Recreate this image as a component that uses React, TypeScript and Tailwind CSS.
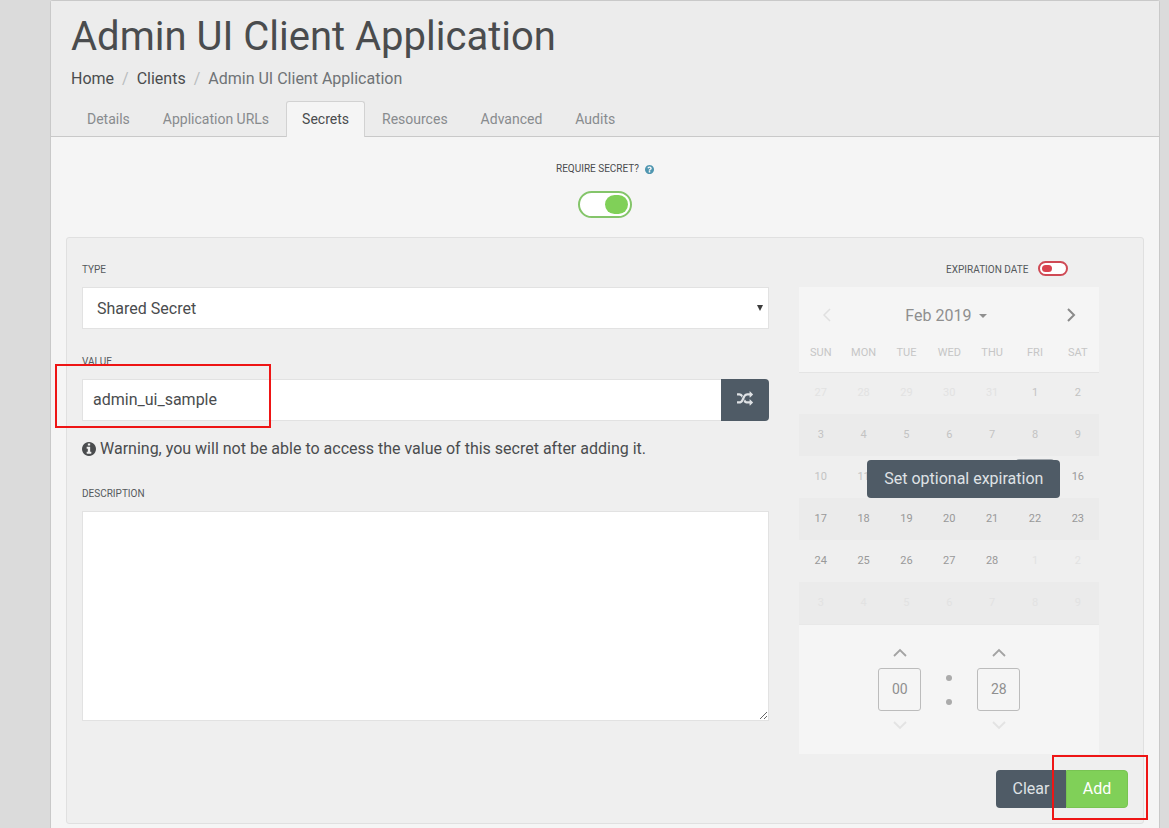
import React from "react";

const TABS = ["Details", "Application URLs", "Secrets", "Resources", "Advanced", "Audits"];
const WEEKDAYS = ["SUN", "MON", "TUE", "WED", "THU", "FRI", "SAT"];

type Tone = "outside" | "past" | "open" | "selected";
type Day = { n: number; tone: Tone };

const TONES: Record<Tone, string> = {
  outside: "text-[#e2e2e2]",
  past: "text-[#c3c3c3]",
  open: "text-[#999999]",
  selected: "bg-[#9fa5ab] text-white",
};

function range(from: number, to: number, tone: Tone): Day[] {
  return Array.from({ length: to - from + 1 }, (_, i) => ({ n: from + i, tone }));
}

const WEEKS: Day[][] = [
  [...range(27, 31, "outside"), ...range(1, 2, "past")],
  range(3, 9, "past"),
  [...range(10, 14, "past"), { n: 15, tone: "selected" }, { n: 16, tone: "open" }],
  range(17, 23, "open"),
  [...range(24, 28, "open"), ...range(1, 2, "outside")],
  range(3, 9, "outside"),
];

function ShuffleIcon() {
  return (
    <svg viewBox="0 0 1792 1792" className="h-4 w-4" fill="currentColor" aria-hidden="true">
      <path d="M666 481q-60 92-137 273-22-45-37-72.5t-40.5-63.5-51-56.5-63-35-81.5-14.5h-224q-14 0-23-9t-9-23v-192q0-14 9-23t23-9h224q250 0 410 225zm1126 799q0 14-9 23l-320 320q-9 9-23 9-13 0-22.5-9.5t-9.5-22.5v-192q-32 0-85 .5t-81 1-73-1-71-5-64-10.5-63-18.5-58-28.5-59-40-55-53.5-56-69.5q59-93 136-273 22 45 37 72.5t40.5 63.5 51 56.5 63 35 81.5 14.5h256v-192q0-14 9-23t23-9q12 0 24 10l319 319q9 9 9 23zm0-896q0 14-9 23l-320 320q-9 9-23 9-13 0-22.5-9.5t-9.5-22.5v-192h-256q-48 0-87 15t-69 45-51 61.5-45 77.5q-32 62-78 171-29 66-49.5 111t-54 105-64 100-74 83-90 68.5-106.5 42-128 16.5h-224q-14 0-23-9t-9-23v-192q0-14 9-23t23-9h224q48 0 87-15t69-45 51-61.5 45-77.5q32-62 78-171 29-66 49.5-111t54-105 64-100 74-83 90-68.5 106.5-42 128-16.5h256v-192q0-14 9-23t23-9q12 0 24 10l319 319q9 9 9 23z" />
    </svg>
  );
}

function InfoIcon() {
  return (
    <svg viewBox="128 128 1536 1536" className="h-3.5 w-3.5" fill="currentColor" aria-hidden="true">
      <path d="M1152 1376v-160q0-14-9-23t-23-9h-96v-512q0-14-9-23t-23-9h-320q-14 0-23 9t-9 23v160q0 14 9 23t23 9h96v320h-96q-14 0-23 9t-9 23v160q0 14 9 23t23 9h448q14 0 23-9t9-23zm-128-896v-160q0-14-9-23t-23-9h-192q-14 0-23 9t-9 23v160q0 14 9 23t23 9h192q14 0 23-9t9-23zm640 416q0 209-103 385.5t-279.5 279.5-385.5 103-385.5-103-279.5-279.5-103-385.5 103-385.5 279.5-279.5 385.5-103 385.5 103 279.5 279.5 103 385.5z" />
    </svg>
  );
}

function QuestionIcon() {
  return (
    <svg viewBox="128 128 1536 1536" className="h-[9px] w-[9px] text-[#4f96b0]" fill="currentColor" aria-hidden="true">
      <path d="M1024 1376v-192q0-14-9-23t-23-9h-192q-14 0-23 9t-9 23v192q0 14 9 23t23 9h192q14 0 23-9t9-23zm256-672q0-88-55.5-163t-138.5-116-170-41q-243 0-371 213-15 24 8 42l132 100q7 6 19 6 16 0 25-12 53-68 86-92 34-24 86-24 48 0 85.5 26t37.5 59q0 38-20 61t-68 45q-63 28-115.5 86.5t-52.5 125.5v36q0 14 9 23t23 9h192q14 0 23-9t9-23q0-19 21.5-49.5t54.5-49.5q32-18 49-28.5t46-35 44.5-48 28-60.5 12.5-81zm384 192q0 209-103 385.5t-279.5 279.5-385.5 103-385.5-103-279.5-279.5-103-385.5 103-385.5 279.5-279.5 385.5-103 385.5 103 279.5 279.5 103 385.5z" />
    </svg>
  );
}

function Chevron({ points, className }: { points: string; className: string }) {
  return (
    <svg viewBox="0 0 14 14" className={`h-3.5 w-3.5 ${className}`} fill="none" stroke="currentColor" aria-hidden="true">
      <polyline points={points} />
    </svg>
  );
}

function TimeField({ label, value }: { label: string; value: string }) {
  return (
    <div className="flex flex-col items-center gap-2">
      <button type="button" aria-label={`Increase ${label}`} className="text-[#a3a3a3]">
        <Chevron points="1,10 7,4 13,10" className="stroke-[1.8]" />
      </button>
      <input
        aria-label={label}
        defaultValue={value}
        className="h-[43px] w-[43px] rounded-[3px] border border-[#bcbcbc] bg-transparent pb-0.5 text-center text-sm text-[#8f8f8f] outline-none"
      />
      <button type="button" aria-label={`Decrease ${label}`} className="text-[#e3e3e3]">
        <Chevron points="1,3 7,9 13,3" className="stroke-[1.8]" />
      </button>
    </div>
  );
}

function Calendar() {
  return (
    <div className="relative w-[300px] max-w-full bg-[#f5f5f5]">
      <div className="flex h-14 items-center justify-between px-[21px]">
        <button type="button" aria-label="Previous month" className="text-[#e0e0e0]">
          <Chevron points="10,1 4,7 10,13" className="stroke-[1.5]" />
        </button>
        <button type="button" className="flex items-center gap-2 pt-0.5 pr-1.5 text-base text-[#8f8f8f]">
          Feb 2019
          <svg viewBox="0 0 8 4" className="h-1 w-2" fill="currentColor" aria-hidden="true">
            <path d="M0 0h8L4 4z" />
          </svg>
        </button>
        <button type="button" aria-label="Next month" className="text-[#8a8a8a]">
          <Chevron points="4,1 10,7 4,13" className="stroke-2" />
        </button>
      </div>
      <table className="w-full table-fixed border-collapse text-center text-[11px]">
        <thead>
          <tr className="h-[29px] border-b border-[#e4e4e4]">
            {WEEKDAYS.map((d) => (
              <th key={d} className="p-0 pb-[9px] font-normal text-[#c6c6c6]">
                {d}
              </th>
            ))}
          </tr>
        </thead>
        <tbody>
          {WEEKS.map((week, w) => (
            <tr key={w} className="h-[42px] bg-[#efefef] even:bg-[#ebebeb]">
              {week.map((day) => (
                <td key={day.n} className="p-0">
                  <button type="button" className={`h-9 w-[38px] rounded-[3px] align-middle ${TONES[day.tone]}`}>
                    {day.n}
                  </button>
                </td>
              ))}
            </tr>
          ))}
        </tbody>
      </table>
      <div className="flex h-[130px] items-center justify-center border-t border-[#e8e8e8]">
        <TimeField label="Hours" value="00" />
        <div className="flex w-14 flex-col items-center gap-[18px]">
          <span className="h-1.5 w-1.5 rounded-full bg-[#ababab]" />
          <span className="h-1.5 w-1.5 rounded-full bg-[#ababab]" />
        </div>
        <TimeField label="Minutes" value="28" />
      </div>
      <button
        type="button"
        className="absolute top-[173px] left-[68px] h-[38px] w-[193px] rounded bg-[#4f5b66] text-base text-[#dfe2e5]"
      >
        Set optional expiration
      </button>
    </div>
  );
}

const LABEL = "block text-[10px] leading-[18px] text-[#55595c] uppercase";

export default function App() {
  return (
    <div className="flex min-h-screen bg-[#dbdbdb] pr-[9px] pl-[50px] font-[Roboto,sans-serif] text-base text-[#4a4c4e]">
      <main className="min-w-0 flex-1 rounded-t-[3px] border border-b-0 border-[#c9c9c9] bg-[#f5f5f5]">
        <header className="border-b border-[#c9c9c9] bg-[#ececec] px-5 pt-3">
          <h1 className="text-[40px] leading-[48px]">Admin UI Client Application</h1>
          <nav aria-label="Breadcrumb" className="mt-1.5 flex gap-2 leading-6">
            <a href="#home">Home</a>
            <span className="text-[#b9bcbe]">/</span>
            <a href="#clients">Clients</a>
            <span className="text-[#b9bcbe]">/</span>
            <span className="text-[#6f7376]">Admin UI Client Application</span>
          </nav>
          <nav aria-label="Sections" className="mt-2.5 -mb-px flex gap-px text-sm">
            {TABS.map((t) => (
              <a
                key={t}
                href="#tab"
                className={
                  t === "Secrets"
                    ? "h-9 rounded-t-[3px] border border-b-0 border-[#d2d2d2] bg-[#f5f5f5] px-[15px] leading-[35px] text-[#4a4c4e]"
                    : "h-9 border border-b-0 border-transparent px-[15px] leading-[35px] text-[#888b8e]"
                }
              >
                {t}
              </a>
            ))}
          </nav>
        </header>

        <div className="px-[15px] pb-1">
          <div className="flex h-[100px] flex-col items-center pt-[23px]">
            <label htmlFor="require" className="flex items-center gap-1.5 text-[10px] leading-[18px]">
              REQUIRE SECRET?
              <QuestionIcon />
            </label>
            <span className="relative mt-[13px] flex">
              <input
                id="require"
                type="checkbox"
                defaultChecked
                className="h-[27px] w-[54px] appearance-none rounded-full border-2 border-[#84c56a] bg-white"
              />
              <span className="pointer-events-none absolute top-1 right-1 h-[19px] w-[23px] rounded-full bg-[#80d058]" />
            </span>
          </div>

          <form className="rounded-[3px] border border-[#e0e0e0] bg-[#efefef] pt-[23px] pb-[15px]">
            <div className="grid grid-cols-3">
              <div className="col-span-2 px-[15px]">
                <label htmlFor="type" className={LABEL}>
                  Type
                </label>
                <div className="relative mt-2">
                  <select
                    id="type"
                    className="block h-[42px] w-full appearance-none border border-[#e2e2e2] bg-white px-3.5 pt-0.5 outline-none"
                  >
                    <option>Shared Secret</option>
                  </select>
                  <svg
                    viewBox="0 0 6 6"
                    className="pointer-events-none absolute top-[18px] right-1.5 h-1.5 w-1.5"
                    fill="#3c3c3c"
                    aria-hidden="true"
                  >
                    <path d="M0 0h6L3 6z" />
                  </svg>
                </div>
                <label htmlFor="value" className={`${LABEL} mt-6`}>
                  Value
                </label>
                <div className="relative mt-2 flex">
                  <input
                    id="value"
                    defaultValue="admin_ui_sample"
                    className="h-[42px] min-w-0 flex-1 border border-r-0 border-[#e2e2e2] bg-white px-2.5 pb-0.5 outline-none"
                  />
                  <button
                    type="button"
                    aria-label="Generate value"
                    className="flex h-[42px] w-12 items-center justify-center rounded-r bg-[#4f5b66] pb-0.5 text-[#dfe2e5]"
                  >
                    <ShuffleIcon />
                  </button>
                  <div className="pointer-events-none absolute -top-[15px] -left-[27px] h-16 w-[216px] border-2 border-[#ee1515]" />
                </div>
                <p className="mt-4 flex items-center gap-1 leading-6">
                  <InfoIcon />
                  Warning, you will not be able to access the value of this secret after adding it.
                </p>
                <label htmlFor="description" className={`${LABEL} mt-6`}>
                  Description
                </label>
                <textarea
                  id="description"
                  className="mt-2 block h-[210px] w-full resize border border-[#e2e2e2] bg-white p-2.5 outline-none"
                />
              </div>
              <div className="px-[15px]">
                <div className="mb-2 flex h-[18px] w-[269px] items-start justify-end gap-2.5">
                  <label htmlFor="expires" className={LABEL}>
                    Expiration date
                  </label>
                  <span className="relative flex">
                    <input
                      id="expires"
                      type="checkbox"
                      className="h-[15px] w-[30px] appearance-none rounded-full border-2 border-[#cf4a55] bg-white"
                    />
                    <span className="pointer-events-none absolute top-1 left-1 h-[7px] w-2.5 rounded-full bg-[#d9434f]" />
                  </span>
                </div>
                <Calendar />
              </div>
            </div>
            <div className="mt-4 flex justify-end px-[15px]">
              <button type="button" className="h-[38px] w-[70px] rounded-l bg-[#4f5b66] text-[#dfe2e5]">
                Clear
              </button>
              <div className="relative">
                <button
                  type="button"
                  className="block h-[38px] w-[62px] rounded-r border border-[#78c452] bg-[#80d058] text-white"
                >
                  Add
                </button>
                <div className="pointer-events-none absolute -top-[15px] -left-[14px] h-[65px] w-24 border-2 border-[#ee1515]" />
              </div>
            </div>
          </form>
        </div>
      </main>
    </div>
  );
}
